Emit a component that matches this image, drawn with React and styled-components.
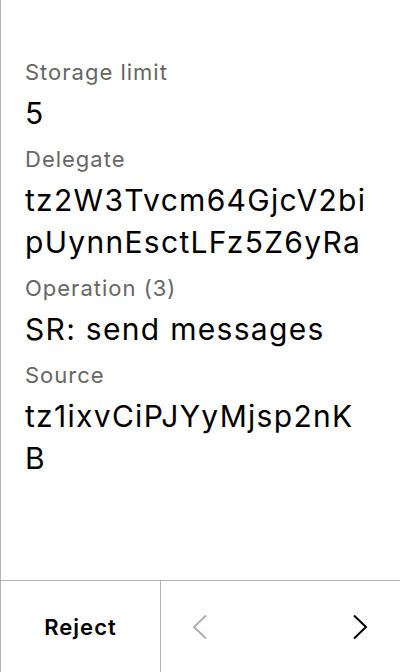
import React from "react";
import styled, { createGlobalStyle } from "styled-components";

const GlobalStyle = createGlobalStyle`
  html, body {
    margin: 0;
    padding: 0;
    background: #ffffff;
  }
  body {
    font-family: Inter, "Noto Sans", sans-serif;
    -webkit-font-smoothing: antialiased;
  }
`;

const fields = [
  { label: "Storage limit", value: "5" },
  { label: "Delegate", value: "tz2W3Tvcm64GjcV2bipUynnEsctLFz5Z6yRa" },
  { label: "Operation (3)", value: "SR: send messages" },
  { label: "Source", value: "tz1ixvCiPJYyMjsp2nKB" },
];

const Screen = styled.div`
  display: flex;
  flex-direction: column;
  height: 672px;
  width: 400px;
  box-sizing: border-box;
  border-left: 1px solid #b4b4b4;
`;

const Details = styled.div`
  flex: 1;
  display: flex;
  flex-direction: column;
  gap: 11px;
  padding: 58px 32px 0 24px;
`;

const Field = styled.div`
  display: flex;
  flex-direction: column;
`;

const Label = styled.div`
  font-size: 22px;
  line-height: 28px;
  letter-spacing: 1px;
  color: #666666;
  margin-bottom: 6px;
`;

const Value = styled.div`
  font-size: 30px;
  line-height: 42px;
  letter-spacing: 1.3px;
  color: #000000;
  word-break: break-all;
`;

const Footer = styled.div`
  display: grid;
  grid-template-columns: 160px 1fr;
  height: 92px;
  border-top: 1px solid #b4b4b4;
  box-sizing: border-box;
`;

const RejectButton = styled.div`
  display: flex;
  align-items: center;
  justify-content: center;
  font-size: 22px;
  font-weight: 600;
  letter-spacing: 1px;
  color: #000000;
  border-right: 1px solid #b4b4b4;
`;

const Nav = styled.div`
  display: flex;
  align-items: center;
  justify-content: space-between;
  padding: 0 32px 0 31px;
`;

const Chevron = ({ dir, color }) => (
  <svg width="16" height="28" viewBox="0 0 16 28">
    <polyline
      points={dir === "left" ? "14,2.5 2,14 14,25.5" : "2,2.5 14,14 2,25.5"}
      fill="none"
      stroke={color}
      strokeWidth="2"
    />
  </svg>
);

export default function App() {
  return (
    <>
      <GlobalStyle />
      <Screen>
        <Details>
          {fields.map((f) => (
            <Field key={f.label}>
              <Label>{f.label}</Label>
              <Value>{f.value}</Value>
            </Field>
          ))}
        </Details>
        <Footer>
          <RejectButton>Reject</RejectButton>
          <Nav>
            <Chevron dir="left" color="#b0b0b0" />
            <Chevron dir="right" color="#000000" />
          </Nav>
        </Footer>
      </Screen>
    </>
  );
}
